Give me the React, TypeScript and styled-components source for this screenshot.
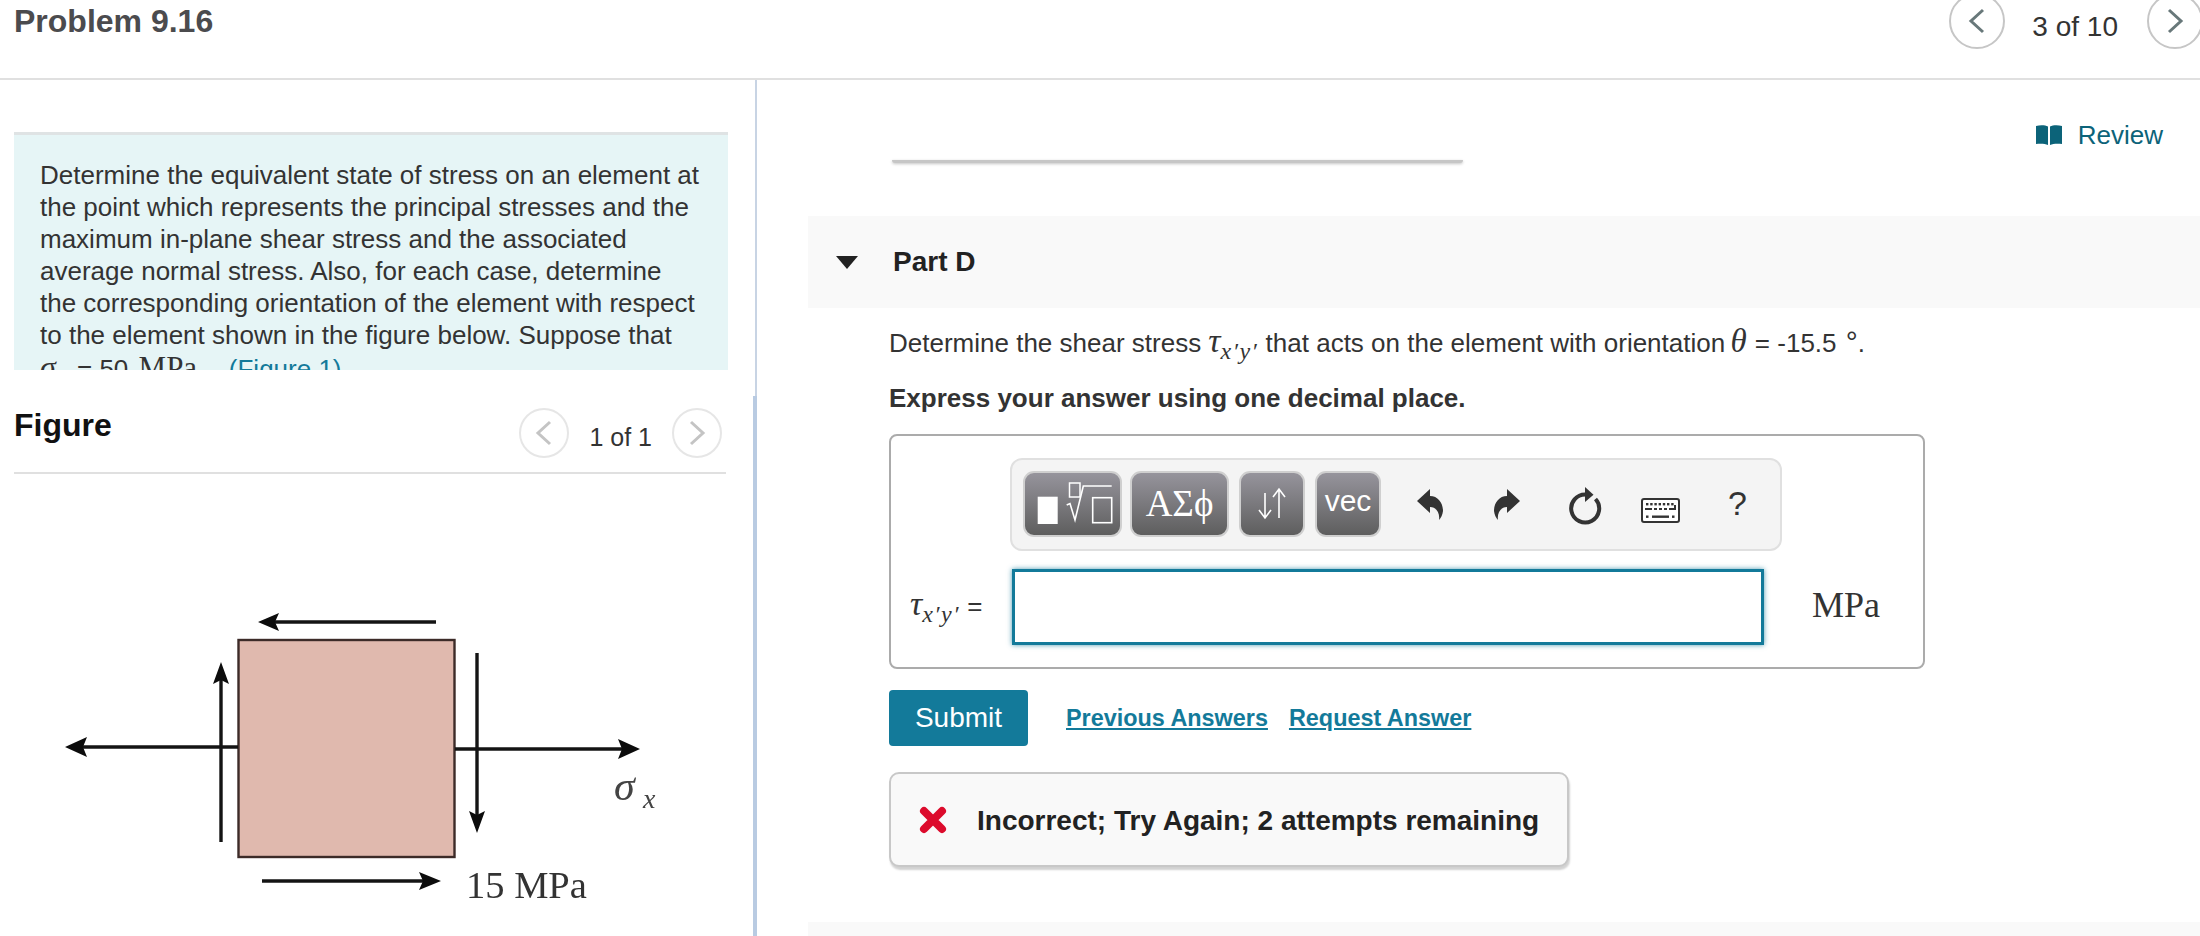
import React from "react";
import styled, { createGlobalStyle } from "styled-components";

const Global = createGlobalStyle`
  html, body { margin: 0; padding: 0; background: #fff; }
  body { font-family: "Liberation Sans", Arial, sans-serif; color: #333; }
  * { box-sizing: border-box; }
`;

const Page = styled.div`
  width: 2200px;
  height: 936px;
  overflow: hidden;
  display: flex;
  flex-direction: column;
`;

const Header = styled.header`
  height: 80px;
  flex: none;
  display: flex;
  align-items: flex-start;
  padding-left: 14px;
  border-bottom: 2px solid #e0e0e0;
`;

const Title = styled.h1`
  margin: 0;
  font-size: 32px;
  line-height: 42px;
  font-weight: 700;
  color: #4b4b4e;
`;

const Pager = styled.div`
  margin-left: auto;
  margin-right: -3px;
  display: flex;
  align-items: flex-start;
`;

const Circle = styled.div<{ $size: number; $line: string }>`
  width: ${(p) => p.$size}px;
  height: ${(p) => p.$size}px;
  flex: none;
  display: flex;
  align-items: center;
  justify-content: center;
  border: 2px solid ${(p) => p.$line};
  border-radius: 50%;
  background: #fff;
`;

const HeaderCircle = styled(Circle)`
  margin-top: -7px;
`;

const PagerCount = styled.span`
  margin: 0 29px 0 27px;
  font-size: 28px;
  line-height: 54px;
  color: #333;
`;

const Body = styled.div`
  flex: 1;
  display: flex;
  min-height: 0;
`;

const Left = styled.aside`
  width: 757px;
  flex: none;
  display: flex;
  flex-direction: column;
`;

const ProblemPane = styled.div`
  height: 316px;
  flex: none;
  padding: 52px 0 0 14px;
  border-right: 2px solid #c8d4e4;
`;

const ProblemBox = styled.div`
  width: 714px;
  height: 238px;
  overflow: hidden;
  padding: 24px 26px 0;
  border-top: 3px solid #dfe3e4;
  background: #e6f5f6;
  font-size: 26px;
  line-height: 32px;
  color: #333;
`;

const ProblemLastLine = styled.span`
  display: block;
  white-space: nowrap;
`;

const ProblemUnit = styled.span`
  font-family: "Liberation Serif", serif;
  font-size: 31px;
  margin: 0 10px 0 3px;
`;

const Sigma = styled.i`
  font-family: "Liberation Serif", serif;
  font-size: 32px;
  margin-right: 14px;
`;

const SerifItalic = styled.i`
  font-family: "Liberation Serif", serif;
`;

const Sub = styled.sub`
  font-size: 24px;
  line-height: 0;
  vertical-align: -0.3em;
  letter-spacing: 1.5px;
`;

const Theta = styled.i`
  font-family: "Liberation Serif", serif;
  font-size: 33px;
  margin: 0 1px 0 -2px;
`;

const Degree = styled.span`
  margin-left: 2px;
  font-size: 30px;
`;

const InlineLink = styled.span`
  color: #137a9a;
`;

const FigurePane = styled.div`
  flex: 1;
  min-height: 0;
  padding-left: 14px;
  border-right: 4px solid #b9cbe2;
`;

const FigureHead = styled.div`
  width: 712px;
  height: 78px;
  display: flex;
  align-items: flex-start;
  border-bottom: 2px solid #e0e0e0;
`;

const FigureTitle = styled.h2`
  margin: 8px 0 0;
  font-size: 32px;
  line-height: 42px;
  font-weight: 700;
  color: #111;
`;

const FigurePager = styled.div`
  margin-left: auto;
  margin-right: 4px;
  padding-top: 12px;
  display: flex;
  align-items: flex-start;
`;

const FigureCount = styled.span`
  margin: 0 20px;
  font-size: 25px;
  line-height: 34px;
  padding-top: 12px;
  color: #333;
`;

const FigureDrawing = styled.svg`
  display: block;
  margin: 0 0 0 -14px;
  filter: blur(0.45px);
`;

const Right = styled.main`
  flex: 1;
  min-width: 0;
  padding-left: 51px;
  display: flex;
  flex-direction: column;
`;

const ReviewRow = styled.div`
  height: 70px;
  flex: none;
  display: flex;
  align-items: flex-end;
  justify-content: flex-end;
  padding-right: 37px;
`;

const ReviewLink = styled.a`
  display: flex;
  align-items: center;
  gap: 16px;
  font-size: 26px;
  line-height: 30px;
  color: #0c6379;
`;

const PriorEdge = styled.div`
  width: 571px;
  height: 3px;
  margin: 10px 0 0 84px;
  flex: none;
  background: #c6c6c6;
  border-radius: 0 0 6px 6px;
  box-shadow: 0 1px 3px rgba(0, 0, 0, 0.24);
`;

const PartBar = styled.div`
  height: 92px;
  margin-top: 53px;
  flex: none;
  display: flex;
  align-items: center;
  padding-left: 28px;
  background: #f9f9f9;
`;

const PartTriangle = styled.span`
  width: 0;
  height: 0;
  border-left: 11px solid transparent;
  border-right: 11px solid transparent;
  border-top: 13px solid #222;
  margin-right: 35px;
`;

const PartTitle = styled.h3`
  margin: 0;
  font-size: 28px;
  line-height: 34px;
  font-weight: 700;
  color: #222;
`;

const PartBody = styled.div`
  flex: none;
  padding-left: 81px;
`;

const Prompt = styled.p`
  margin: 16px 0 0;
  height: 34px;
  font-size: 26px;
  line-height: 34px;
  color: #333;
  white-space: nowrap;
`;

const Tau = styled.i`
  font-family: "Liberation Serif", serif;
  font-size: 34px;
`;

const Instruction = styled.p`
  margin: 23px 0 0;
  font-size: 26px;
  line-height: 34px;
  font-weight: 700;
  color: #333;
`;

const AnswerBox = styled.div`
  width: 1036px;
  height: 235px;
  margin-top: 19px;
  padding-top: 22px;
  border: 2px solid #ababab;
  border-radius: 8px;
`;

const Toolbar = styled.div`
  width: 772px;
  height: 93px;
  margin-left: 119px;
  padding: 11px 0 0 11px;
  display: flex;
  align-items: flex-start;
  background: #f4f4f4;
  border: 2px solid #e0e0e0;
  border-radius: 12px;
`;

const ToolButton = styled.div<{ $width: number; $gap: number }>`
  width: ${(p) => p.$width}px;
  height: 66px;
  margin-right: ${(p) => p.$gap}px;
  flex: none;
  display: flex;
  align-items: center;
  justify-content: center;
  border: 2px solid #cfcfcf;
  border-radius: 11px;
  background: linear-gradient(#96949c, #5e5e5e);
  color: #fff;
`;

const GreekLabel = styled.span`
  font-family: "Liberation Serif", serif;
  font-size: 37px;
  line-height: 60px;
`;

const VecLabel = styled.span`
  font-size: 30px;
  line-height: 54px;
  padding-bottom: 6px;
`;

const ToolSlot = styled.div`
  width: 76.75px;
  height: 66px;
  flex: none;
  display: flex;
  align-items: center;
  justify-content: center;
  color: #333;
`;

const ToolGap = styled.div`
  width: 1px;
  flex: none;
`;

const HelpMark = styled.span`
  font-size: 34px;
  line-height: 60px;
  padding-bottom: 2px;
`;

const AnswerRow = styled.div`
  height: 78px;
  margin-top: 17px;
  display: flex;
  align-items: center;
`;

const AnswerLabel = styled.div`
  width: 121px;
  flex: none;
  margin-top: -6px;
  padding-left: 19px;
  font-size: 26px;
  white-space: nowrap;
  color: #333;
`;

const AnswerInput = styled.input`
  width: 752px;
  height: 76px;
  flex: none;
  padding: 0;
  background: #fff;
  border: 3px solid #137a9a;
  outline: none;
  box-shadow: 0 0 5px rgba(19, 122, 154, 0.75);
`;

const Unit = styled.span`
  margin: -4px 0 0 48px;
  font-family: "Liberation Serif", serif;
  font-size: 36px;
  color: #333;
`;

const ActionRow = styled.div`
  margin-top: 21px;
  display: flex;
  align-items: center;
`;

const SubmitButton = styled.button`
  width: 139px;
  height: 56px;
  padding: 0;
  border: 0;
  border-radius: 4px;
  background: #137a9a;
  color: #fff;
  font: 28px "Liberation Sans", sans-serif;
`;

const TextAction = styled.a<{ $left: number }>`
  margin-left: ${(p) => p.$left}px;
  font-size: 23.4px;
  font-weight: 700;
  color: #137a9a;
  text-decoration: underline;
`;

const Feedback = styled.div`
  width: 680px;
  height: 95px;
  margin-top: 26px;
  padding-left: 28px;
  display: flex;
  align-items: center;
  gap: 30px;
  background: #f9f9f9;
  border: 2px solid #c8c8c8;
  border-radius: 10px;
  box-shadow: 1px 3px 2px rgba(0, 0, 0, 0.18);
`;

const FeedbackText = styled.strong`
  padding-top: 3px;
  font-size: 28px;
  color: #222;
  white-space: nowrap;
`;

const NextPart = styled.div`
  height: 40px;
  margin-top: 55px;
  flex: none;
  background: #f9f9f9;
`;

const Chevron = ({ dir, color }: { dir: "l" | "r"; color: string }) => (
  <svg width="18" height="26" viewBox="0 0 18 26" fill="none">
    <path
      d={dir === "l" ? "M15 2 L3 13 L15 24" : "M3 2 L15 13 L3 24"}
      stroke={color}
      strokeWidth="3"
    />
  </svg>
);

const Book = () => (
  <svg width="26" height="20" viewBox="0 0 26 20">
    <path d="M0 1 C4 0 9 0 12 1.5 V20 C9 18.5 4 18.5 0 19 Z" fill="#0c6379" />
    <path d="M26 1 C22 0 17 0 14 1.5 V20 C17 18.5 22 18.5 26 19 Z" fill="#0c6379" />
  </svg>
);

const MathIcon = () => (
  <svg width="95" height="62" viewBox="2 2 95 62" fill="none">
    <rect x="14.7" y="25.7" width="20" height="27.3" fill="#fff" />
    <rect x="46.5" y="12" width="10.5" height="14" stroke="#fff" strokeWidth="1.5" />
    <path d="M43.7 34 L47 32.5 L52 49 L60.3 15 H88.7" stroke="#fff" strokeWidth="1.6" />
    <rect x="69.7" y="26.7" width="19" height="25" stroke="#fff" strokeWidth="1.6" />
  </svg>
);

const UpDownIcon = () => (
  <svg width="30" height="34" viewBox="0 0 30 34" fill="none" stroke="#fff" strokeWidth="1.6">
    <path d="M8 6 V31 M2 23 L8 31 L14 23" />
    <path d="M22 31 V2 M16 10 L22 2 L28 10" />
  </svg>
);

const Undo = ({ flip }: { flip?: boolean }) => (
  <svg width="30" height="35" viewBox="0 0 30 35" style={flip ? { transform: "scaleX(-1)" } : undefined}>
    <path
      d="M2 14 L15 2 V9 C23 9 28 16 28 24 C27.5 28 26 31 24 33 C25 27 22 20 15 20 V26 Z"
      fill="#333"
    />
  </svg>
);

const Reload = () => (
  <svg width="36" height="42" viewBox="0 0 36 42" fill="none">
    <path d="M20 11.5 A14 14 0 1 0 29.5 16" stroke="#333" strokeWidth="4" />
    <path d="M19 4 L27.5 11.7 L19 19 Z" fill="#333" />
  </svg>
);

const Keyboard = () => (
  <svg width="39" height="25" viewBox="0 0 39 25" style={{ marginTop: 12 }}>
    <rect x="1" y="1" width="37" height="23" rx="2" fill="#fff" stroke="#333" strokeWidth="2" />
    {[0, 1, 2, 3, 4, 5, 6].map((i) => (
      <rect key={`a${i}`} x={5 + i * 4.2} y="5" width="2.4" height="2.4" fill="#333" />
    ))}
    <path d="M4 11 H11 M13 11 H16 M18 11 H21 M23 11 H26 M28 11 H34 V7" stroke="#333" strokeWidth="2" fill="none" />
    <rect x="5" y="17.5" width="2.5" height="2.4" fill="#333" />
    <rect x="11" y="17.5" width="17" height="2.4" fill="#333" />
    <rect x="31" y="17.5" width="2.5" height="2.4" fill="#333" />
  </svg>
);

const Cross = () => (
  <svg width="28" height="28" viewBox="0 0 28 28">
    <path d="M5 5 L23 23 M23 5 L5 23" stroke="#dc0b2c" strokeWidth="8" strokeLinecap="round" />
  </svg>
);

const Arrow = ({ d, head }: { d: string; head: string }) => (
  <>
    <path d={d} stroke="#141414" strokeWidth="3.4" fill="none" />
    <path d={head} fill="#0c0c0c" />
  </>
);

const StressFigure = () => (
  <FigureDrawing width="700" height="462" viewBox="0 474 700 462">
    <rect x="238.5" y="640" width="216" height="217" fill="#e0b9ae" stroke="#3c2b28" strokeWidth="2.4" />
    <Arrow d="M436 622 H275" head="M258 622 L279 613 L275 622 L279 631 Z" />
    <Arrow d="M262 881 H425" head="M441 881 L419 872 L423 881 L419 890 Z" />
    <Arrow d="M221 842 V680" head="M221 662 L213 684 L221 680 L229 684 Z" />
    <Arrow d="M477 653 V815" head="M477 833 L469 811 L477 815 L485 811 Z" />
    <Arrow d="M238 747 H82" head="M65 747 L87 737 L83 747 L87 757 Z" />
    <Arrow d="M455 749 H622" head="M640 749 L618 739 L622 749 L618 759 Z" />
    <text x="614" y="800" fontFamily="Liberation Serif" fontStyle="italic" fontSize="42" fill="#444">σ</text>
    <text x="643" y="808" fontFamily="Liberation Serif" fontStyle="italic" fontSize="28" fill="#444">x</text>
    <text x="466" y="898" fontFamily="Liberation Serif" fontSize="38.5" fill="#333">15 MPa</text>
  </FigureDrawing>
);

export default function App() {
  return (
    <Page>
      <Global />
      <Header>
        <Title>Problem 9.16</Title>
        <Pager>
          <HeaderCircle $size={56} $line="#c6c6c6">
            <Chevron dir="l" color="#68787a" />
          </HeaderCircle>
          <PagerCount>3 of 10</PagerCount>
          <HeaderCircle $size={56} $line="#c6c6c6">
            <Chevron dir="r" color="#68787a" />
          </HeaderCircle>
        </Pager>
      </Header>
      <Body>
        <Left>
          <ProblemPane>
            <ProblemBox>
              Determine the equivalent state of stress on an element at the point which represents the principal
              stresses and the maximum in-plane shear stress and the associated average normal stress. Also, for each
              case, determine the corresponding orientation of the element with respect to the element shown in the
              figure below. Suppose that
              <ProblemLastLine>
                <Sigma>σ</Sigma>
                <Sub /> = 50 <ProblemUnit>MPa</ProblemUnit> . <InlineLink>(Figure 1)</InlineLink>
              </ProblemLastLine>
            </ProblemBox>
          </ProblemPane>
          <FigurePane>
            <FigureHead>
              <FigureTitle>Figure</FigureTitle>
              <FigurePager>
                <Circle $size={50} $line="#e6e6e6">
                  <Chevron dir="l" color="#c4c4c4" />
                </Circle>
                <FigureCount>1 of 1</FigureCount>
                <Circle $size={50} $line="#e6e6e6">
                  <Chevron dir="r" color="#c4c4c4" />
                </Circle>
              </FigurePager>
            </FigureHead>
            <StressFigure />
          </FigurePane>
        </Left>
        <Right>
          <ReviewRow>
            <ReviewLink>
              <Book />
              Review
            </ReviewLink>
          </ReviewRow>
          <PriorEdge />
          <PartBar>
            <PartTriangle />
            <PartTitle>Part D</PartTitle>
          </PartBar>
          <PartBody>
            <Prompt>
              Determine the shear stress <Tau>τ</Tau>
              <SerifItalic>
                <Sub>x′y′</Sub>
              </SerifItalic>{" "}
              that acts on the element with orientation <Theta>θ</Theta> = -15.5 <Degree>°</Degree>.
            </Prompt>
            <Instruction>Express your answer using one decimal place.</Instruction>
            <AnswerBox>
              <Toolbar>
                <ToolButton $width={99} $gap={8}>
                  <MathIcon />
                </ToolButton>
                <ToolButton $width={99} $gap={10}>
                  <GreekLabel>ΑΣϕ</GreekLabel>
                </ToolButton>
                <ToolButton $width={66} $gap={10}>
                  <UpDownIcon />
                </ToolButton>
                <ToolButton $width={66} $gap={10}>
                  <VecLabel>vec</VecLabel>
                </ToolButton>
                <ToolGap />
                <ToolSlot>
                  <Undo />
                </ToolSlot>
                <ToolSlot>
                  <Undo flip />
                </ToolSlot>
                <ToolSlot>
                  <Reload />
                </ToolSlot>
                <ToolSlot>
                  <Keyboard />
                </ToolSlot>
                <ToolSlot>
                  <HelpMark>?</HelpMark>
                </ToolSlot>
              </Toolbar>
              <AnswerRow>
                <AnswerLabel>
                  <Tau>τ</Tau>
                  <SerifItalic>
                    <Sub>x′y′</Sub>
                  </SerifItalic>{" "}
                  =
                </AnswerLabel>
                <AnswerInput aria-label="answer" />
                <Unit>MPa</Unit>
              </AnswerRow>
            </AnswerBox>
            <ActionRow>
              <SubmitButton>Submit</SubmitButton>
              <TextAction $left={38}>Previous Answers</TextAction>
              <TextAction $left={21}>Request Answer</TextAction>
            </ActionRow>
            <Feedback>
              <Cross />
              <FeedbackText>Incorrect; Try Again; 2 attempts remaining</FeedbackText>
            </Feedback>
          </PartBody>
          <NextPart />
        </Right>
      </Body>
    </Page>
  );
}
